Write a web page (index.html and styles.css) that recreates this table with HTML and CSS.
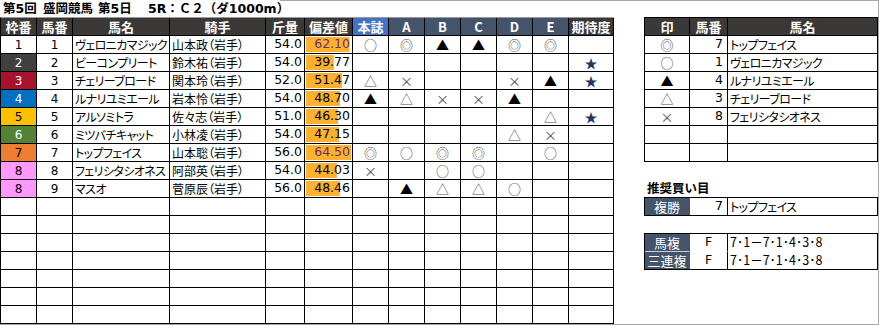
FILE: index.html
```html
<!DOCTYPE html>
<html lang="ja">
<head>
<meta charset="utf-8">
<title>第5回 盛岡競馬 第5日 5R</title>
<link rel="stylesheet" href="styles.css">
</head>
<body>
<div class="frame">
  <div class="title"><span class="t1">第5回</span><span class="t2">盛岡競馬</span><span class="t3">第5日</span><span class="t4">5R：Ｃ２（ダ1000m）</span></div>
  <div class="main">
    <div class="race">
      <div class="row hd"><div>枠番</div><div>馬番</div><div>馬名</div><div>騎手</div><div>斤量</div><div>偏差値</div><div class="honshi">本誌</div><div class="ab">A</div><div class="ab">B</div><div class="ab">C</div><div class="ab">D</div><div class="ab">E</div><div>期待度</div></div>
      <div class="row"><div class="w1">1</div><div>1</div><div class="name">ヴェロニカマジック</div><div class="jockey">山本政（岩手）</div><div class="num">54.0</div><div class="num dev hi" style="--w:43.5px">62.10</div><div class="mk">○</div><div class="mk">◎</div><div class="mk b">▲</div><div class="mk b">▲</div><div class="mk">◎</div><div class="mk">◎</div><div class="mk"></div></div>
      <div class="row"><div class="w2">2</div><div>2</div><div class="name">ビーコンプリート</div><div class="jockey">鈴木祐（岩手）</div><div class="num">54.0</div><div class="num dev" style="--w:27.8px">39.77</div><div class="mk"></div><div class="mk"></div><div class="mk"></div><div class="mk"></div><div class="mk"></div><div class="mk"></div><div class="mk star">★</div></div>
      <div class="row"><div class="w3">3</div><div>3</div><div class="name">チェリーブロード</div><div class="jockey">関本玲（岩手）</div><div class="num">52.0</div><div class="num dev" style="--w:36px">51.47</div><div class="mk">△</div><div class="mk">×</div><div class="mk"></div><div class="mk"></div><div class="mk">×</div><div class="mk b">▲</div><div class="mk star">★</div></div>
      <div class="row"><div class="w4">4</div><div>4</div><div class="name">ルナリユミエール</div><div class="jockey">岩本怜（岩手）</div><div class="num">54.0</div><div class="num dev" style="--w:34.1px">48.70</div><div class="mk b">▲</div><div class="mk">△</div><div class="mk">×</div><div class="mk">×</div><div class="mk b">▲</div><div class="mk"></div><div class="mk"></div></div>
      <div class="row"><div class="w5">5</div><div>5</div><div class="name">アルソミトラ</div><div class="jockey">佐々志（岩手）</div><div class="num">51.0</div><div class="num dev" style="--w:32.4px">46.30</div><div class="mk"></div><div class="mk"></div><div class="mk"></div><div class="mk"></div><div class="mk"></div><div class="mk">△</div><div class="mk star">★</div></div>
      <div class="row"><div class="w6">6</div><div>6</div><div class="name">ミツバチキャット</div><div class="jockey">小林凌（岩手）</div><div class="num">54.0</div><div class="num dev" style="--w:33px">47.15</div><div class="mk"></div><div class="mk"></div><div class="mk"></div><div class="mk"></div><div class="mk">△</div><div class="mk">×</div><div class="mk"></div></div>
      <div class="row"><div class="w7">7</div><div>7</div><div class="name">トップフェイス</div><div class="jockey">山本聡（岩手）</div><div class="num">56.0</div><div class="num dev hi" style="--w:45px">64.50</div><div class="mk">◎</div><div class="mk">○</div><div class="mk">◎</div><div class="mk">◎</div><div class="mk"></div><div class="mk">○</div><div class="mk"></div></div>
      <div class="row"><div class="w8">8</div><div>8</div><div class="name">フェリシタシオネス</div><div class="jockey">阿部英（岩手）</div><div class="num">54.0</div><div class="num dev" style="--w:30.8px">44.03</div><div class="mk">×</div><div class="mk"></div><div class="mk">○</div><div class="mk">○</div><div class="mk"></div><div class="mk"></div><div class="mk"></div></div>
      <div class="row"><div class="w8">8</div><div>9</div><div class="name">マスオ</div><div class="jockey">菅原辰（岩手）</div><div class="num">56.0</div><div class="num dev" style="--w:33.9px">48.46</div><div class="mk"></div><div class="mk b">▲</div><div class="mk">△</div><div class="mk">△</div><div class="mk">○</div><div class="mk"></div><div class="mk"></div></div>
      <div class="row"><div></div><div></div><div></div><div></div><div></div><div></div><div></div><div></div><div></div><div></div><div></div><div></div><div></div></div>
      <div class="row"><div></div><div></div><div></div><div></div><div></div><div></div><div></div><div></div><div></div><div></div><div></div><div></div><div></div></div>
      <div class="row"><div></div><div></div><div></div><div></div><div></div><div></div><div></div><div></div><div></div><div></div><div></div><div></div><div></div></div>
      <div class="row"><div></div><div></div><div></div><div></div><div></div><div></div><div></div><div></div><div></div><div></div><div></div><div></div><div></div></div>
      <div class="row"><div></div><div></div><div></div><div></div><div></div><div></div><div></div><div></div><div></div><div></div><div></div><div></div><div></div></div>
      <div class="row"><div></div><div></div><div></div><div></div><div></div><div></div><div></div><div></div><div></div><div></div><div></div><div></div><div></div></div>
      <div class="row"><div></div><div></div><div></div><div></div><div></div><div></div><div></div><div></div><div></div><div></div><div></div><div></div><div></div></div>
    </div>
    <div class="side">
      <div class="mt">
        <div class="mrow hd"><div>印</div><div>馬番</div><div>馬名</div></div>
        <div class="mrow"><div class="mk">◎</div><div class="r">7</div><div class="name">トップフェイス</div></div>
        <div class="mrow"><div class="mk">○</div><div class="r">1</div><div class="name">ヴェロニカマジック</div></div>
        <div class="mrow"><div class="mk b">▲</div><div class="r">4</div><div class="name">ルナリユミエール</div></div>
        <div class="mrow"><div class="mk">△</div><div class="r">3</div><div class="name">チェリーブロード</div></div>
        <div class="mrow"><div class="mk">×</div><div class="r">8</div><div class="name">フェリシタシオネス</div></div>
        <div class="mrow"><div></div><div></div><div></div></div>
        <div class="mrow"><div></div><div></div><div></div></div>
      </div>
      <div class="rec">推奨買い目</div>
      <div class="box">
        <div class="brow"><div class="lbl">複勝</div><div class="r">7</div><div class="name">トップフェイス</div></div>
      </div>
      <div class="box box2">
        <div class="brow first"><div class="lbl">馬複</div><div class="c">F</div><div class="combo">7･1－7･1･4･3･8</div></div>
        <div class="brow"><div class="lbl">三連複</div><div class="c">F</div><div class="combo">7･1－7･1･4･3･8</div></div>
      </div>
    </div>
  </div>
</div>
</body>
</html>
```
FILE: styles.css
```css
* { box-sizing: border-box; }

body {
  margin: 0;
  background: #fff;
  color: #000;
  font-family: "DejaVu Sans", "Noto Sans CJK JP", sans-serif;
  font-size: 12px;
}

.frame {
  width: 879px;
  height: 325px;
  border: 1px solid #a6a6a6;
  border-left: 0;
}

.title {
  display: flex;
  width: 280px;
  height: 17px;
  margin-top: -1px;
  padding: 1px 0 0 3px;
  background: #fff;
  font-family: "DejaVu Sans", "Noto Sans CJK JP", sans-serif;
  font-weight: bold;
  font-size: 12.5px;
  line-height: 16px;
  white-space: nowrap;
}
.title > span { flex: 0 0 auto; }
.title .t1 { width: 40px; }
.title .t2 { width: 55px; }
.title .t3 { width: 50px; }

.main {
  display: flex;
  gap: 30px;
}

/* left race table */
.race {
  width: 614px;
  border-left: 1px solid #000;
  border-top: 1px solid #999;
}

.row {
  display: grid;
  grid-template-columns: 36px 36px 97px 96px 39px 48px repeat(6, 36px) 45px;
  height: 18px;
}

.row > div,
.mrow > div,
.brow > div {
  display: flex;
  align-items: center;
  justify-content: center;
  border-right: 1px solid #000;
  border-bottom: 1px solid #000;
  white-space: nowrap;
  overflow: hidden;
  line-height: 1;
}

.hd > div {
  background: #3b3838;
  color: #fff;
  font-family: "Noto Sans CJK JP", sans-serif;
  font-weight: bold;
  font-size: 13px;
}
.hd > .honshi { background: #4472c4; }
.hd > .ab { background: #44546a; }

.row > .name,
.row > .jockey,
.mrow > .name,
.brow > .name,
.brow > .combo {
  justify-content: flex-start;
  padding-left: 2px;
  font-family: "Noto Sans CJK JP", sans-serif;
  font-feature-settings: "palt";
}
.row > .name,
.mrow > .name,
.brow > .name { letter-spacing: -0.6px; }

.row > .num {
  justify-content: flex-end;
  padding-right: 2px;
  font-size: 12.5px;
}

.row > .dev {
  background: linear-gradient(#fdb12f, #fdb12f) 1px 1px / var(--w) 15px no-repeat;
}
.row > .hi { color: #6b2d6b; }

.mk {
  font-family: "Noto Sans CJK JP", sans-serif;
  font-size: 13px;
  color: #4d4d4d;
}
.mk.b { color: #000; }
.mk.star { color: #1f3864; }

/* frame (枠) colours */
.w2 { background: #404040; color: #fff; }
.w3 { background: #a8122a; color: #fff; }
.w4 { background: #0070c0; color: #fff; }
.w5 { background: #ffc000; }
.w6 { background: #548235; color: #fff; }
.w7 { background: #ed7d31; }
.w8 { background: #ff99ff; }

/* right side */
.side {
  width: 234px;
  display: flex;
  flex-direction: column;
}

.mt {
  border-left: 1px solid #000;
  border-top: 1px solid #000;
}

.mrow {
  display: grid;
  grid-template-columns: 45px 38px 150px;
  height: 18px;
}

.mrow > .r,
.brow > .r {
  justify-content: flex-end;
  padding-right: 4px;
  font-size: 12.5px;
}

.rec {
  height: 35px;
  display: flex;
  align-items: flex-end;
  padding: 0 0 1px 3px;
  font-family: "Noto Sans CJK JP", sans-serif;
  font-weight: bold;
  font-size: 12.5px;
  line-height: 16px;
}

.box {
  border: 1px solid #000;
}
.box2 { margin-top: 17px; }

.brow {
  display: grid;
  grid-template-columns: 45px 38px 149px;
  height: 17px;
}
.brow > div { border-bottom: 0; }
.brow > div:last-child { border-right: 0; }
.brow.first { height: 18px; }
.brow.first > div { border-bottom: 1px solid #fff; }
.brow.first > .lbl { border-bottom-color: #c8ccd4; }

.brow > .lbl {
  background: #44546a;
  color: #fff;
  font-family: "Noto Sans CJK JP", sans-serif;
  font-size: 13px;
  border-right-color: #44546a;
}
.brow > .c { font-size: 12.5px; }
.brow > .combo {
  padding-left: 2px;
  font-size: 12.5px;
  overflow: visible;
}
```
